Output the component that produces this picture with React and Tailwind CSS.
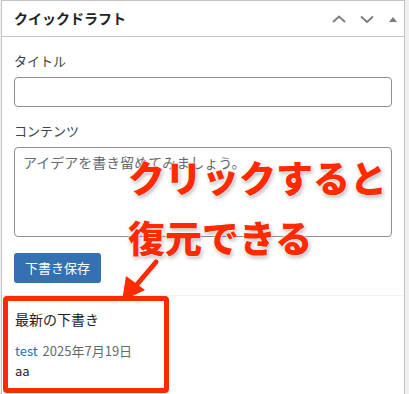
import React from 'react';

const jp = { fontFamily: '"Noto Sans CJK JP", "Noto Sans", sans-serif' };

function Arrow() {
  return (
    <svg width="60" height="60" viewBox="0 0 60 60" className="absolute left-[110px] top-[255px]">
      <line x1="46" y1="7" x2="24" y2="33" stroke="#ff2a00" strokeWidth="5" strokeLinecap="round" />
      <polygon points="12,46 16,21 35,35" fill="#ff2a00" />
    </svg>
  );
}

export default function App() {
  return (
    <div className="relative w-[409px] h-[394px] overflow-hidden bg-[#f0f0f1]" style={jp}>
      <div className="ml-[1px] w-[404px] h-[420px] bg-white border border-[#c3c4c7]">
        {/* ヘッダー */}
        <div className="flex items-center justify-between h-[36px] pl-[12px] pr-[5px] border-b border-[#c3c4c7]">
          <h2 className="text-[14px] font-bold text-[#1d2327]">クイックドラフト</h2>
          <div className="flex items-center gap-[12px] text-[#787c82]">
            <svg width="16" height="16" viewBox="0 0 16 16"><path d="M2 11 L8 5.5 L14 11" fill="none" stroke="currentColor" strokeWidth="1.8" /></svg>
            <svg width="16" height="16" viewBox="0 0 16 16"><path d="M2 5.5 L8 11 L14 5.5" fill="none" stroke="currentColor" strokeWidth="1.8" /></svg>
            <svg width="12" height="12" viewBox="0 0 12 12"><polygon points="2,9 6,4 10,9" fill="currentColor" /></svg>
          </div>
        </div>

        {/* フォーム */}
        <div className="px-[12px] pt-[14px]">
          <label className="block text-[13px] text-[#3c434a] leading-[20px]">タイトル</label>
          <input type="text" className="mt-[6px] block w-[378px] h-[30px] border border-[#8c8f94] rounded-[4px]" />
          <label className="block mt-[14px] text-[13px] text-[#3c434a] leading-[20px]">コンテンツ</label>
          <textarea
            placeholder="アイデアを書き留めてみましょう。"
            className="mt-[6px] block w-[378px] h-[90px] border border-[#8c8f94] rounded-[4px] px-[8px] py-[4px] text-[14px] resize-none placeholder:text-[#646970]"
          />
          <button className="mt-[16px] h-[30px] px-[11px] rounded-[3px] bg-[#3371b0] text-white text-[13px]">
            下書き保存
          </button>
        </div>

        <div className="mt-[12px] border-t border-[#f0f0f1]" />

        {/* 最新の下書き */}
        <div className="ml-[1px] w-[166px] h-[97px] border-[5px] border-[#ff2a00] rounded-[4px] px-[7px] pt-[8px]">
          <h3 className="text-[14px] text-[#1d2327] leading-[20px]">最新の下書き</h3>
          <div className="mt-[12px] text-[13px] leading-[20px]">
            <span className="text-[#2271b1]">test</span>
            <span className="ml-[5px] text-[#646970]">2025年7月19日</span>
          </div>
          <p className="text-[13px] text-[#1d2327] leading-[20px]">aa</p>
        </div>
      </div>

      {/* 注釈 */}
      <div className="absolute left-[128px] top-[147px] text-[37px] font-black leading-[60px] text-[#ff2a00] [text-shadow:0_0_2px_#fff,0_0_3px_#fff,1px_2px_4px_rgba(0,0,0,0.35)]">
        <div>クリックすると</div>
        <div>復元できる</div>
      </div>
      <Arrow />
    </div>
  );
}
